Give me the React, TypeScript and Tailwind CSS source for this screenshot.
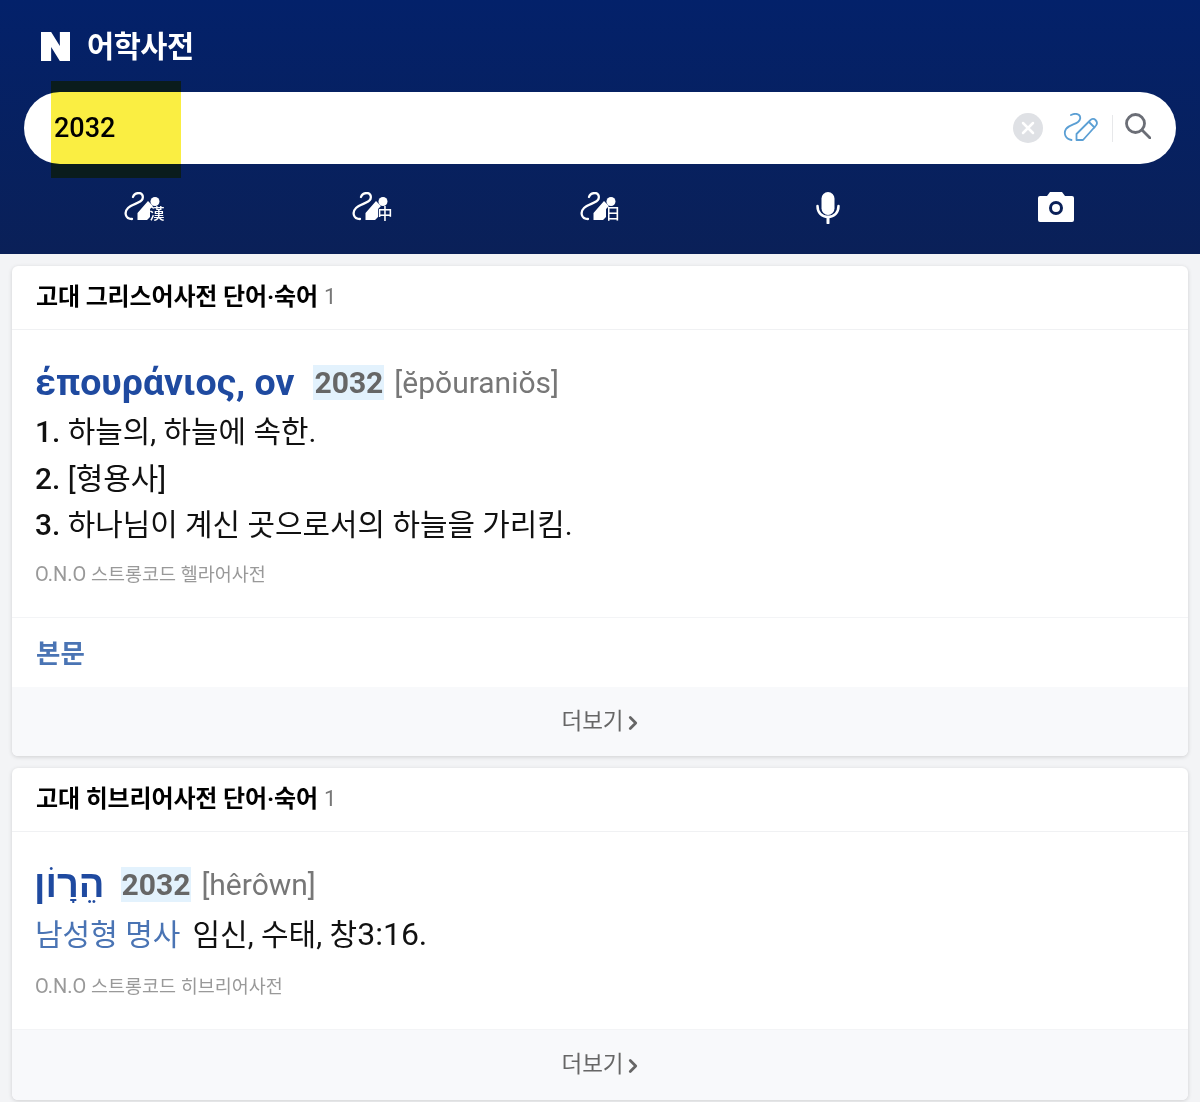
import { ChevronRight } from "lucide-react";

const FONT = "font-['Roboto','Noto_Sans_CJK_KR',sans-serif]";

function HandIcon({ label }: { label: string }) {
  return (
    <div className="relative h-[32px] w-[40px]">
      <svg width="40" height="32" viewBox="0 0 40 32" fill="none" className="absolute left-0 top-0">
        <path
          d="M9 5C10 2 13 1 15 1C18 1 19.500 4 18.500 7C17 11 8 12 4 16C0 20 1 27 8 27"
          stroke="#fff"
          strokeWidth="2.300"
          strokeLinecap="round"
        />
        <path d="M13.500 28v-7L24 9l5 5-3 3v8l-3 3z" fill="#fff" />
        <circle cx="31" cy="9.500" r="4.500" fill="#fff" />
      </svg>
      <span className="absolute left-[25.500px] top-[12px] text-[15px] font-medium leading-[20px] text-white">{label}</span>
    </div>
  );
}

function CardHeader({ title }: { title: string }) {
  return (
    <div className="flex h-[64px] items-center border-b border-[#f0f1f3] px-[24px] pb-[2px]">
      <h2 className="text-[24px] font-bold tracking-[-0.15px] text-black">{title}</h2>
      <span className="ml-[6px] text-[22px] text-[#777]">1</span>
    </div>
  );
}

function MoreRow({ className }: { className: string }) {
  return (
    <div className={`flex items-center justify-center bg-[#f8f9fb] pl-[5px] text-[22.500px] text-[#666] ${className}`}>
      더보기
      <ChevronRight size={22} strokeWidth={3} className="ml-[-2px] mt-[2px]" />
    </div>
  );
}

function Code() {
  return <span className="bg-[#e3f2fd] px-[1px] text-[30px] leading-[35px] font-bold text-[#666]">2032</span>;
}

function Source({ name }: { name: string }) {
  return (
    <p className="text-[18.500px] leading-[30px] text-[#999]">
      <span className="text-[20px]">O.N.O</span> 스트롱코드 {name}
    </p>
  );
}

export default function App() {
  return (
    <div className={`${FONT} h-[1102px] overflow-hidden bg-[#f3f4f6]`}>
      <header className="relative h-[254px] bg-gradient-to-b from-[#03216a] to-[#0a2058] px-[24px]">
        <div className="flex h-[92px] items-center pl-[17px]">
          <svg width="29" height="29" viewBox="0 0 30 30" fill="#fff">
            <path d="M0 0h10.500l9 14.500V0H30v30H19.500l-9-14.500V30H0z" />
          </svg>
          <h1 className="ml-[17px] mt-[3px] text-[29.500px] font-bold tracking-[-0.5px] text-white">어학사전</h1>
        </div>

        <div className="flex h-[72px] items-center rounded-full bg-white pl-[30px] pr-[25px]">
          <span className="flex-1 text-[27px] font-medium text-black">2032</span>
          <svg width="32" height="32" viewBox="0 0 32 32">
            <circle cx="16" cy="16" r="15" fill="#dfe1e5" />
            <path d="M11 11l10 10M21 11L11 21" stroke="#fff" strokeWidth="2.500" strokeLinecap="round" />
          </svg>
          <svg width="36" height="28" viewBox="0 0 36 28" fill="none" stroke="#5b9fd4" strokeWidth="1.800" className="ml-[19px] mt-[-2px]">
            <path d="M8 2C11 .5 14 .5 16 2C18 4 17.500 7 15 9C12 11.500 6 12 3 16C.5 20 2 26 8.500 27" strokeLinecap="round" />
            <path d="M13.500 27v-6L27 7.500c2-2 4-2 5.500-.5s2 3.500 .5 5.500L20 27z" strokeLinejoin="round" />
            <path d="M26 9l6 6" />
          </svg>
          <div className="ml-[13px] h-[27px] w-px bg-[#e7e8ea]" />
          <svg width="26" height="26" viewBox="0 0 26 26" fill="none" stroke="#6b6e76" strokeWidth="2.800" className="ml-[12px] mt-[-5px]">
            <circle cx="10.500" cy="10.500" r="9" />
            <path d="M17 17l8 8" strokeLinecap="round" />
          </svg>
        </div>

        <div className="mx-[6px] grid grid-cols-5 pt-[28px]">
          <div className="flex justify-center"><HandIcon label="漢" /></div>
          <div className="flex justify-center"><HandIcon label="中" /></div>
          <div className="flex justify-center"><HandIcon label="日" /></div>
          <div className="flex justify-center">
            <svg width="24" height="32" viewBox="0 0 24 32" fill="none">
              <rect x="5.500" y="0" width="13" height="23" rx="6.500" fill="#fff" />
              <path d="M1.500 14c0 6.500 4 11 10.500 11s10.500-4.500 10.500-11" stroke="#fff" strokeWidth="2.500" strokeLinecap="round" />
              <path d="M12 25v6" stroke="#fff" strokeWidth="3" strokeLinecap="round" />
            </svg>
          </div>
          <div className="flex justify-center">
            <svg width="36" height="30" viewBox="0 0 36 30" fill="none">
              <path
                d="M2 4h7l3-4h12l3 4h7a2 2 0 0 1 2 2v22a2 2 0 0 1-2 2H2a2 2 0 0 1-2-2V6a2 2 0 0 1 2-2z"
                fill="#fff"
              />
              <circle cx="18" cy="16" r="5.500" stroke="#0a2058" strokeWidth="3" />
            </svg>
          </div>
        </div>

        <div className="absolute left-[51px] top-[81px] h-[97px] w-[130px] bg-[#faee42] mix-blend-multiply" />
        <div className="absolute left-[51px] top-[81px] h-[11px] w-[130px] bg-[#0a1c1c]" />
        <div className="absolute left-[51px] top-[164px] h-[14px] w-[130px] bg-[#0a1c1c]" />
      </header>

      <main className="flex flex-col gap-[12px] px-[12px] pt-[12px]">
        <section className="flex h-[490px] flex-col overflow-hidden rounded-[6px] bg-white shadow-[0_1px_4px_rgba(0,0,0,0.15)]">
          <CardHeader title="고대 그리스어사전 단어·숙어" />
          <div className="h-[288px] border-b border-[#f3f4f6] px-[23px] pt-[30px]">
            <div className="flex h-[44px] items-center">
              <span className="mr-[19px] text-[37.500px] font-bold text-[#1f4aa0]">έπουράνιος, ον</span>
              <Code />
              <span className="ml-[10px] text-[30px] text-[#777]">[ĕpŏuraniŏs]</span>
            </div>
            <div className="text-[29.900px] leading-[46.500px] text-[#111]">
              <p className="mt-[5px]"><b className="font-medium">1.</b> 하늘의, 하늘에 속한.</p>
              <p><b className="font-medium">2.</b> [형용사]</p>
              <p><b className="font-medium">3.</b> 하나님이 계신 곳으로서의 하늘을 가리킴.</p>
            </div>
            <div className="mt-[10px]"><Source name="헬라어사전" /></div>
          </div>
          <div className="flex h-[69px] items-center px-[24px] pt-[2px] text-[26.500px] font-bold text-[#4a74b4]">본문</div>
          <MoreRow className="h-[69px]" />
        </section>

        <section className="flex h-[332px] flex-col overflow-hidden rounded-[6px] bg-white shadow-[0_1px_4px_rgba(0,0,0,0.15)]">
          <CardHeader title="고대 히브리어사전 단어·숙어" />
          <div className="h-[198px] border-b border-[#f3f4f6] px-[23px] pt-[30px]">
            <div className="flex h-[44px] items-center">
              <span className="ml-[-1px] mr-[16px] font-['Liberation_Sans',sans-serif] text-[38px] font-bold text-[#1f4aa0]">הֵרָוֹן</span>
              <Code />
              <span className="ml-[10px] text-[30px] text-[#777]">[hêrôwn]</span>
            </div>
            <p className="mt-[5px] text-[30px] leading-[46.500px] text-[#111]">
              <span className="mr-[12px] text-[#4a74b4]">남성형 명사</span>임신, 수태, 창<span className="text-[32px]">3:16.</span>
            </p>
            <div className="mt-[12px]"><Source name="히브리어사전" /></div>
          </div>
          <MoreRow className="flex-1" />
        </section>
      </main>
    </div>
  );
}
